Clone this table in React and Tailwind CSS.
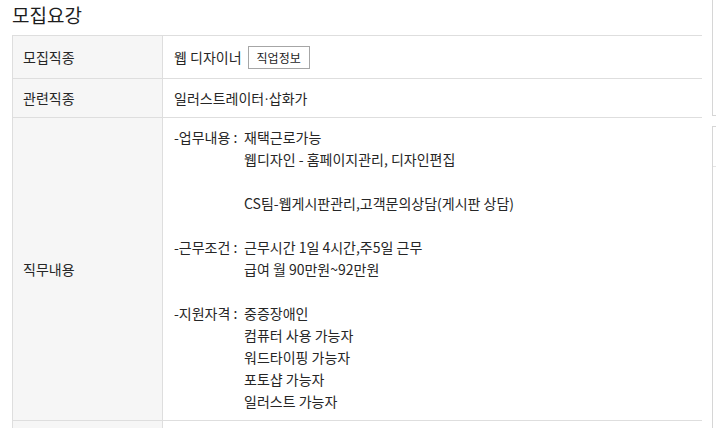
import React from "react";

const font = { fontFamily: '"Noto Sans CJK KR", "Noto Sans", sans-serif' };

function Section({ label, lines }) {
  return (
    <div className="flex">
      <span className="w-[70px] shrink-0 whitespace-pre">{label}</span>
      <div className="flex flex-col">
        {lines.map((l, i) => (
          <div key={i} className="h-[22px] whitespace-pre">{l}</div>
        ))}
      </div>
    </div>
  );
}

export default function App() {
  return (
    <div
      className="w-[716px] h-[428px] overflow-hidden bg-white flex text-[#262626]"
      style={font}
    >
      <div className="w-[702px] shrink-0 pl-[12px]">
        <div className="h-[35px] text-[19px] leading-[30px] text-[#1e1e1e]">모집요강</div>
        <div className="border-t border-l border-[#dedede] text-[14px]">
          <div className="grid grid-cols-[150px_1fr] border-b border-[#dedede]">
            <div className="bg-[#f6f6f6] border-r border-[#dedede] h-[42px] flex items-center pl-[10px] leading-[22px]">
              모집직종
            </div>
            <div className="h-[42px] flex items-center pl-[11px] leading-[22px]">
              <span>웹 디자이너</span>
              <span className="ml-[6px] h-[23px] px-[8px] border border-[#a6a6a6] text-[12px] leading-[21px] text-[#1e1e1e] flex items-center">
                직업정보
              </span>
            </div>
          </div>
          <div className="grid grid-cols-[150px_1fr] border-b border-[#dedede]">
            <div className="bg-[#f6f6f6] border-r border-[#dedede] h-[38px] flex items-center pl-[10px] leading-[22px]">
              관련직종
            </div>
            <div className="h-[38px] flex items-center pl-[11px] leading-[22px]">
              일러스트레이터<span style={{ fontFamily: '"Liberation Sans", sans-serif' }}>·</span>삽화가
            </div>
          </div>
          <div className="grid grid-cols-[150px_1fr] border-b border-[#dedede]">
            <div className="bg-[#f6f6f6] border-r border-[#dedede] flex items-center pl-[10px] leading-[22px]">
              직무내용
            </div>
            <div className="py-[8px] pl-[11px] leading-[22px]">
              <Section
                label="-업무내용 : "
                lines={[
                  "재택근로가능",
                  "웹디자인 - 홈페이지관리, 디자인편집",
                  "",
                  "CS팀-웹게시판관리,고객문의상담(게시판 상담)",
                  "",
                ]}
              />
              <Section
                label="-근무조건 : "
                lines={["근무시간 1일 4시간,주5일 근무", "급여 월 90만원~92만원", ""]}
              />
              <Section
                label="-지원자격 : "
                lines={[
                  "중증장애인",
                  "컴퓨터 사용 가능자",
                  "워드타이핑 가능자",
                  "포토샵 가능자",
                  "일러스트 가능자",
                ]}
              />
            </div>
          </div>
          <div className="grid grid-cols-[150px_1fr]">
            <div className="bg-[#f6f6f6] border-r border-[#dedede] h-[40px]"></div>
            <div></div>
          </div>
        </div>
      </div>
      <div className="ml-[10px] flex-1 flex flex-col">
        <div className="h-[116px] border-l border-b border-[#d6d6d6]"></div>
        <div className="mt-[10px] flex-1 border-l border-t border-[#d6d6d6]">
          <div className="h-[40px] border-b border-[#e4e4e4]"></div>
        </div>
      </div>
    </div>
  );
}
